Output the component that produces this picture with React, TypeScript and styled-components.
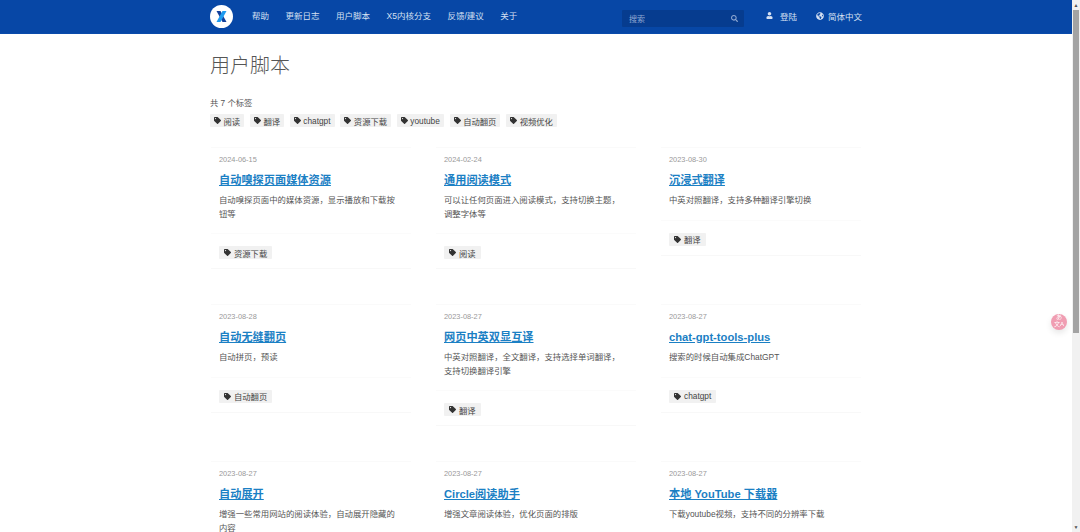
import React from 'react';
import styled, {createGlobalStyle} from 'styled-components';
import {FaTag, FaSearch, FaUser, FaGlobeAmericas} from 'react-icons/fa';

const GlobalStyle = createGlobalStyle`
    html, body {
        margin: 0;
        padding: 0;
        height: 100%;
        overflow: hidden;
        background: #fff;
    }
    body {
        font-family: 'Liberation Sans', 'Noto Sans CJK SC', sans-serif;
    }
`;

const Page = styled.div`
    display: flex;
    height: 100vh;
`;

const Main = styled.div`
    flex: 1;
    min-width: 0;
    overflow: hidden;
`;

const Header = styled.header`
    height: 33px;
    background: #0747a6;
    border-bottom: 1px solid #0a4bab;
    display: flex;
    align-items: center;
    padding-left: 210px;
    color: #d5e0f2;
    font-size: 8.5px;
`;

const Logo = styled.svg`
    width: 23px;
    height: 23px;
    margin-right: 19px;
    flex: none;
`;

const Nav = styled.nav`
    display: flex;
    gap: 16.5px;
    width: 370px;
    margin-top: -3px;
`;

const NavLink = styled.a`
    white-space: nowrap;
`;

const Search = styled.div`
    width: 122px;
    height: 17px;
    box-sizing: border-box;
    background: #063c8f;
    border-radius: 1px;
    display: flex;
    align-items: center;
    justify-content: space-between;
    padding: 0 6px 0 7px;
    color: #8fa8d2;
    font-size: 8px;
    margin: 3px 22px 0 0;

    svg {
        width: 7px;
        height: 7px;
    }
`;

const HeaderAction = styled.a<{$gap: number; $icon: number}>`
    display: flex;
    align-items: center;
    gap: ${props => props.$gap}px;
    margin: -2px 19px 0 0;
    white-space: nowrap;

    svg {
        width: ${props => props.$icon}px;
        height: ${props => props.$icon}px;
    }
`;

const Content = styled.main`
    padding: 21px 0 0 210px;
`;

const PageTitle = styled.h1`
    margin: 0;
    font-size: 20px;
    line-height: 22px;
    font-weight: 300;
    color: #555;
`;

const TagCount = styled.div`
    margin-top: 21px;
    font-size: 8.3px;
    line-height: 10px;
    color: #555;
`;

const TagList = styled.div`
    display: flex;
    gap: 5.8px;
    margin-top: 6px;
`;

const TagChip = styled.a<{$inCard?: boolean}>`
    display: inline-flex;
    align-items: center;
    gap: ${props => (props.$inCard ? '3px' : '2.5px')};
    height: 13px;
    padding: ${props => (props.$inCard ? '0 5px' : '0 4px')};
    background: #f1f1f1;
    border-radius: 1px;
    color: #444;
    font-size: 8.3px;
    white-space: nowrap;

    svg {
        width: 7px;
        height: 7px;
        color: #333;
    }
`;

const CardGrid = styled.div`
    display: grid;
    grid-template-columns: repeat(3, 200px);
    column-gap: 25px;
    row-gap: 35px;
    align-items: start;
    margin: 20px 0 0 1px;
`;

const Card = styled.article`
    border-top: 1px solid #fafafa;
    border-bottom: 1px solid #f8f8f8;
    box-shadow: 0 0 2px rgba(0, 0, 0, 0.012);
`;

const CardBody = styled.div`
    padding: 7px 8px 12px;
`;

const CardDate = styled.div`
    font-size: 7.4px;
    line-height: 9px;
    color: #999;
`;

const CardTitle = styled.a`
    display: block;
    margin-top: 9px;
    font-size: 11.2px;
    line-height: 14px;
    font-weight: 700;
    color: #1b80c4;
    text-decoration: underline;
`;

const CardText = styled.p`
    margin: 7px 0 0;
    font-size: 8.4px;
    line-height: 13.5px;
    color: #555;
`;

const CardFooter = styled.div`
    padding: 8px;
    border-top: 1px solid #fbfbfb;
`;

const ScrollBar = styled.div`
    width: 8px;
    flex: none;
    background: #f1f1f1;
    display: flex;
    flex-direction: column;
    align-items: center;
    color: #505050;
    font-size: 5px;
    line-height: 10px;
`;

const ScrollThumb = styled.div`
    width: 6px;
    height: 323px;
    background: #a3a3a3;
`;

const ScrollSpace = styled.div`
    flex: 1;
`;

const TranslateButton = styled.div`
    position: fixed;
    left: 1051px;
    top: 314px;
    width: 16px;
    height: 16px;
    border-radius: 50%;
    background: #f09db2;
    box-shadow: 0 3px 6px rgba(0, 0, 0, 0.1);
    color: #fff;
    font-size: 6px;
    line-height: 7px;
    text-align: center;
    overflow: hidden;
`;

const links = ['帮助', '更新日志', '用户脚本', 'X5内核分支', '反馈/建议', '关于'];
const tags = ['阅读', '翻译', 'chatgpt', '资源下载', 'youtube', '自动翻页', '视频优化'];

interface Script {
    date: string;
    title: string;
    text: string;
    tag?: string;
}

const scripts: Script[] = [
    {date: '2024-06-15', title: '自动嗅探页面媒体资源', text: '自动嗅探页面中的媒体资源，显示播放和下载按钮等', tag: '资源下载'},
    {date: '2024-02-24', title: '通用阅读模式', text: '可以让任何页面进入阅读模式，支持切换主题，调整字体等', tag: '阅读'},
    {date: '2023-08-30', title: '沉浸式翻译', text: '中英对照翻译，支持多种翻译引擎切换', tag: '翻译'},
    {date: '2023-08-28', title: '自动无缝翻页', text: '自动拼页，预读', tag: '自动翻页'},
    {date: '2023-08-27', title: '网页中英双显互译', text: '中英对照翻译，全文翻译，支持选择单词翻译，支持切换翻译引擎', tag: '翻译'},
    {date: '2023-08-27', title: 'chat-gpt-tools-plus', text: '搜索的时候自动集成ChatGPT', tag: 'chatgpt'},
    {date: '2023-08-27', title: '自动展开', text: '增强一些常用网站的阅读体验，自动展开隐藏的内容', tag: '阅读'},
    {date: '2023-08-27', title: 'Circle阅读助手', text: '增强文章阅读体验，优化页面的排版', tag: '阅读'},
    {date: '2023-08-27', title: '本地 YouTube 下载器', text: '下载youtube视频，支持不同的分辨率下载', tag: 'youtube'},
];

const ScriptCard = (props: Script) => {
    return (
        <Card>
            <CardBody>
                <CardDate>{props.date}</CardDate>
                <CardTitle>{props.title}</CardTitle>
                <CardText>{props.text}</CardText>
            </CardBody>
            <CardFooter>
                <TagChip $inCard><FaTag/>{props.tag}</TagChip>
            </CardFooter>
        </Card>
    );
};

export default function App() {
    return (
        <Page>
            <GlobalStyle/>
            <Main>
                <Header>
                    <Logo viewBox="0 0 46 46">
                        <circle cx="23" cy="23" r="23" fill="#fff"/>
                        <path d="M13 12 L21 12 L33 34 L25 34 Z" fill="#12409c"/>
                        <path d="M33 12 L25 12 L13 34 L21 34 Z" fill="#1e9bf0"/>
                    </Logo>
                    <Nav>
                        {links.map(link => <NavLink key={link}>{link}</NavLink>)}
                    </Nav>
                    <Search>搜索<FaSearch/></Search>
                    <HeaderAction $gap={7} $icon={7}><FaUser/>登陆</HeaderAction>
                    <HeaderAction $gap={4} $icon={8}><FaGlobeAmericas/>简体中文</HeaderAction>
                </Header>
                <Content>
                    <PageTitle>用户脚本</PageTitle>
                    <TagCount>共 7 个标签</TagCount>
                    <TagList>
                        {tags.map(tag => <TagChip key={tag}><FaTag/>{tag}</TagChip>)}
                    </TagList>
                    <CardGrid>
                        {scripts.map(script => <ScriptCard key={script.title} {...script}/>)}
                    </CardGrid>
                </Content>
            </Main>
            <ScrollBar>
                ▲
                <ScrollThumb/>
                <ScrollSpace/>
                ▼
            </ScrollBar>
            <TranslateButton>あ<br/>文A</TranslateButton>
        </Page>
    );
}
